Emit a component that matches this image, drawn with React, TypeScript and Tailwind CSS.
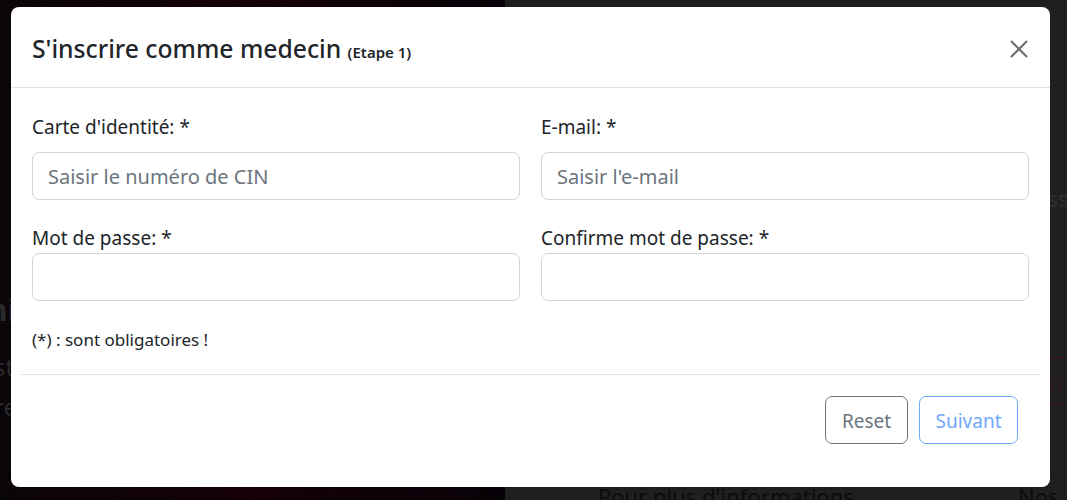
import { X } from 'lucide-react';

function Field({ label, placeholder, type = 'text', gap }: { label: string; placeholder?: string; type?: string; gap: string }) {
  return (
    <div className="flex flex-col">
      <label className="text-[19px] leading-[28px] text-[#212529]">{label}</label>
      <input
        type={type}
        placeholder={placeholder}
        className={`${gap} h-[48px] w-full rounded-[7px] border border-[#ced4da] bg-white px-[15px] text-[20px] text-[#212529] outline-none placeholder:text-[#6c757d]`}
      />
    </div>
  );
}

export default function App() {
  return (
    <div className="relative h-[500px] w-[1067px] overflow-hidden font-['Noto_Sans',sans-serif]">
      {/* page behind the modal */}
      <div className="flex h-full">
        <div className="flex w-[505px] flex-col bg-gradient-to-r from-[#0a0508] via-[#16000a] to-[#070207] pt-[290px] text-[#2a2a2e]">
          <div className="-ml-[12px] text-[30px] font-bold leading-[40px]">ni</div>
          <div className="-ml-[6px] mt-[22px] text-[24px] leading-[30px]">st</div>
          <div className="-ml-[6px] mt-[10px] text-[24px] leading-[30px]">re</div>
        </div>
        <div className="relative flex-1 bg-[#1f1f1f]">
          <div className="absolute right-[-14px] top-[182px] text-[22px] text-[#2f2f2f]">sse</div>
          <div className="absolute left-[530px] top-[357px] h-[48px] w-[60px] border-y border-[#3d1016] pl-[5px] pt-[6px] text-[24px] text-[#2a1a1c]">m</div>
          <div className="absolute left-[93px] top-[480px] text-[22px] text-[#0c0c0c]">Pour plus d'informations</div>
          <div className="absolute left-[513px] top-[480px] text-[22px] text-[#0c0c0c]">Nos c</div>
        </div>
      </div>

      {/* modal */}
      <div className="absolute left-[11px] top-[7px] flex h-[480px] w-[1039px] flex-col rounded-[8px] bg-white">
        <div className="flex h-[81px] items-start justify-between border-b border-[#dee2e6] pl-[21px] pr-[16px] pt-[26px]">
          <h4 className="text-[24.7px] font-medium leading-[32px] text-[#212529]">
            S'inscrire comme medecin <span className="text-[15px] font-semibold">(Etape 1)</span>
          </h4>
          <button className="mt-[1px] text-[#6c6c6c]">
            <X size={30} strokeWidth={1.6} />
          </button>
        </div>
        <div className="px-[21px] pt-[25px]">
          <div className="grid grid-cols-2 gap-x-[21px] gap-y-[24px]">
            <Field label="Carte d'identité: *" placeholder="Saisir le numéro de CIN" gap="mt-[11px]" />
            <Field label="E-mail: *" placeholder="Saisir l'e-mail" gap="mt-[11px]" />
            <Field label="Mot de passe: *" type="password" gap="mt-[1px]" />
            <Field label="Confirme mot de passe: *" type="password" gap="mt-[1px]" />
          </div>
          <p className="mt-[27px] text-[17px] leading-[24px] text-[#212529]">(*) : sont obligatoires !</p>
        </div>
        <div className="mx-[10px] mt-[22px] border-t border-[#dee2e6]" />
        <div className="flex justify-end gap-[11px] pr-[32px] pt-[21px]">
          <button className="h-[48px] w-[83px] rounded-[7px] border border-[#6c757d] pt-[2px] text-[19px] text-[#6c757d]">Reset</button>
          <button className="h-[48px] w-[99px] rounded-[7px] border border-[#6ea8fe] pt-[2px] text-[19px] text-[#6ea8fe]">Suivant</button>
        </div>
      </div>
    </div>
  );
}
